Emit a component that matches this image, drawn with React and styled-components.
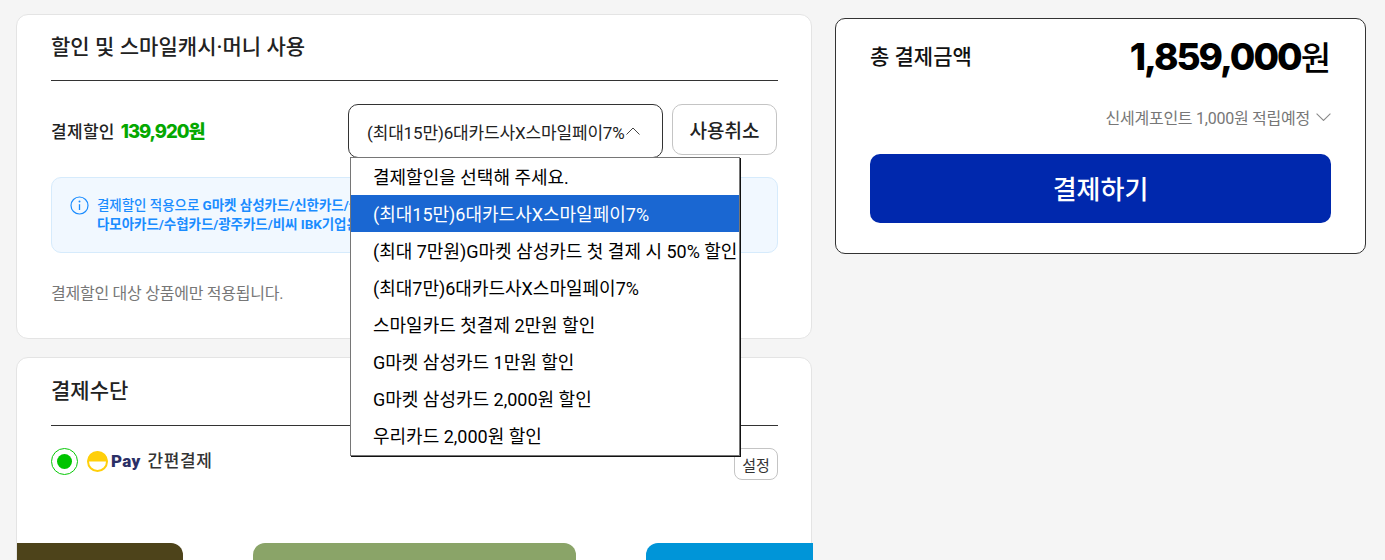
import React from 'react';
import styled, { createGlobalStyle } from 'styled-components';

const GlobalStyle = createGlobalStyle`
  html, body {
    margin: 0;
    padding: 0;
    background: #f5f5f5;
    height: 560px;
    overflow: hidden;
  }
  * {
    box-sizing: border-box;
  }
  body {
    font-family: Roboto, "Noto Sans CJK KR", sans-serif;
    color: #222;
  }
`;

const Page = styled.div`
  display: flex;
  align-items: flex-start;
  gap: 23px;
  padding-left: 16px;
  height: 560px;
  overflow: hidden;
`;

const LeftColumn = styled.div`
  display: flex;
  flex-direction: column;
  gap: 18px;
  width: 796px;
  padding-top: 14px;
`;

const Card = styled.section`
  background: #fff;
  border: 1px solid #e4e4e4;
  border-radius: 12px;
  padding: 0 33px 0 34px;
`;

const DiscountCard = styled(Card)`
  height: 325px;
`;

const PaymentCard = styled(Card)`
  height: 260px;
`;

const CardTitle = styled.h2`
  margin: 0;
  height: ${(p) => p.$height}px;
  border-bottom: 1px solid #333;
  font-size: 21px;
  font-weight: 500;
  line-height: ${(p) => p.$height - 2}px;
  letter-spacing: 0.05px;
  color: #222;
`;

const DiscountRow = styled.div`
  display: flex;
  align-items: flex-start;
  margin-top: 23px;
  padding-right: 1px;
`;

const DiscountLabel = styled.div`
  flex: 1;
  font-size: 17px;
  font-weight: 500;
  line-height: 55px;
  letter-spacing: 0.3px;
`;

const DiscountAmount = styled.strong`
  margin-left: 6px;
  color: #04a800;
  font-family: Inter, "Noto Sans CJK KR", sans-serif;
  font-size: 18.5px;
  font-weight: 800;
  letter-spacing: -1.05px;
`;

const SelectWrap = styled.div`
  position: relative;
  width: 315px;
`;

const SelectBox = styled.div`
  display: flex;
  align-items: center;
  gap: 1px;
  height: 54px;
  padding-left: 18px;
  border: 1px solid #333;
  border-radius: 10px;
  background: #fff;
  font-size: 17px;
  letter-spacing: -0.16px;
  white-space: nowrap;
`;

const OptionList = styled.ul`
  position: absolute;
  top: 53px;
  left: 2px;
  z-index: 5;
  width: 390px;
  margin: 0;
  padding: 0 0 1px;
  list-style: none;
  background: #fff;
  border: 1px solid #767676;
  box-shadow: 1px 1px 0 #111;
`;

const Option = styled.li`
  height: 37px;
  padding: 1px 0 0 22px;
  font-size: 18px;
  line-height: 37px;
  white-space: nowrap;
  overflow: hidden;
  color: ${(p) => (p.$selected ? '#fff' : '#000')};
  background: ${(p) => (p.$selected ? '#1a67d2' : '#fff')};
`;

const CancelButton = styled.button`
  width: 105px;
  height: 51px;
  margin-left: 9px;
  padding: 0;
  border: 1px solid #c4c4c4;
  border-radius: 10px;
  background: #fff;
  color: #222;
  font-family: inherit;
  font-size: 19px;
  font-weight: 500;
`;

const InfoBox = styled.div`
  display: flex;
  gap: 8px;
  height: 76px;
  margin-top: 17px;
  padding: 18px 18px 0;
  background: #f1f8ff;
  border: 1px solid #d6ebfc;
  border-radius: 10px;
`;

const InfoText = styled.p`
  margin: 0;
  color: #1a8cff;
  font-size: 13.5px;
  font-weight: 500;
  line-height: 19px;
  letter-spacing: -0.05px;
  white-space: nowrap;
  overflow: hidden;
  b {
    font-weight: 700;
  }
`;

const Note = styled.p`
  margin: 30px 0 0;
  color: #777;
  font-size: 16px;
  line-height: 22px;
  letter-spacing: -0.25px;
`;

const MethodRow = styled.div`
  display: flex;
  align-items: flex-start;
  margin-top: 22px;
`;

const Radio = styled.span`
  display: flex;
  align-items: center;
  justify-content: center;
  width: 27px;
  height: 27px;
  border: 1px solid #06c806;
  border-radius: 50%;
  &::after {
    content: '';
    width: 15px;
    height: 15px;
    border-radius: 50%;
    background: #00c400;
  }
`;

const PayLogo = styled.svg`
  width: 21px;
  height: 21px;
  margin: 3px 3px 0 9px;
`;

const PayWord = styled.span`
  color: #2b2f66;
  font-family: Roboto, sans-serif;
  font-size: 17px;
  font-weight: 900;
  letter-spacing: 0.3px;
  line-height: 27px;
`;

const MethodName = styled.span`
  flex: 1;
  margin-left: 7px;
  font-size: 17px;
  font-weight: 500;
  line-height: 27px;
  letter-spacing: 0.6px;
  color: #333;
`;

const SettingButton = styled.button`
  width: 44px;
  height: 32px;
  padding: 0;
  border: 1px solid #c4c4c4;
  border-radius: 8px;
  background: #fff;
  color: #333;
  font-family: inherit;
  font-size: 15px;
  font-weight: 400;
`;

const Carousel = styled.div`
  display: flex;
  gap: 70px;
  margin: 63px -35px 0 -34px;
  overflow: hidden;
`;

const Slide = styled.div`
  flex: none;
  width: 323px;
  height: 60px;
  border-radius: 12px 12px 0 0;
  background: ${(p) => p.$color};
  &:first-child {
    margin-left: -157px;
  }
`;

const SummaryCard = styled.aside`
  width: 531px;
  height: 236px;
  margin-top: 18px;
  padding: 0 34px;
  background: #fff;
  border: 1px solid #333;
  border-radius: 10px;
`;

const TotalRow = styled.div`
  display: flex;
  align-items: center;
  justify-content: space-between;
  height: 76px;
`;

const TotalLabel = styled.span`
  margin-top: -5px;
  font-size: 21px;
  font-weight: 500;
  color: #111;
`;

const TotalValue = styled.span`
  margin-top: -3px;
  color: #000;
  font-size: 33px;
  font-weight: 500;
`;

const TotalNumber = styled.strong`
  font-family: Inter, sans-serif;
  font-size: 37px;
  font-weight: 800;
  letter-spacing: -2px;
`;

const PointRow = styled.div`
  display: flex;
  align-items: center;
  justify-content: flex-end;
  gap: 6px;
  height: 22px;
  margin-top: 11px;
  color: #777;
  font-size: 16px;
  letter-spacing: -0.25px;
`;

const PayButton = styled.button`
  display: block;
  width: 461px;
  height: 69px;
  margin-top: 26px;
  padding: 0 0 3px;
  border: 0;
  border-radius: 10px;
  background: #0028ad;
  color: #fff;
  font-family: inherit;
  font-size: 26px;
  font-weight: 500;
`;

const Chevron = ({ up, size = 14, color = '#444' }) => (
  <svg width={size} height={size / 2 + 1} viewBox="0 0 14 8" fill="none">
    <path
      d={up ? 'M0.5 7.5L7 1L13.5 7.5' : 'M0.5 0.5L7 7L13.5 0.5'}
      stroke={color}
      strokeWidth="1"
    />
  </svg>
);

const options = [
  '결제할인을 선택해 주세요.',
  '(최대15만)6대카드사X스마일페이7%',
  '(최대 7만원)G마켓 삼성카드 첫 결제 시 50% 할인',
  '(최대7만)6대카드사X스마일페이7%',
  '스마일카드 첫결제 2만원 할인',
  'G마켓 삼성카드 1만원 할인',
  'G마켓 삼성카드 2,000원 할인',
  '우리카드 2,000원 할인',
];

function App() {
  return (
    <Page>
      <GlobalStyle />
      <LeftColumn>
        <DiscountCard>
          <CardTitle $height={66}>할인 및 스마일캐시·머니 사용</CardTitle>
          <DiscountRow>
            <DiscountLabel>
              결제할인
              <DiscountAmount>139,920원</DiscountAmount>
            </DiscountLabel>
            <SelectWrap>
              <SelectBox>
                (최대15만)6대카드사X스마일페이7%
                <Chevron up />
              </SelectBox>
              <OptionList>
                {options.map((o, i) => (
                  <Option key={o} $selected={i === 1}>
                    {o}
                  </Option>
                ))}
              </OptionList>
            </SelectWrap>
            <CancelButton>사용취소</CancelButton>
          </DiscountRow>
          <InfoBox>
            <svg width="19" height="19" viewBox="0 0 19 19" fill="none" style={{ flex: 'none' }}>
              <circle cx="9.5" cy="9.5" r="8.5" stroke="#1a8cff" strokeWidth="1.2" />
              <circle cx="9.5" cy="5.6" r="1" fill="#1a8cff" />
              <path d="M9.5 8.2V14" stroke="#1a8cff" strokeWidth="1.3" />
            </svg>
            <InfoText>
              결제할인 적용으로 <b>G마켓 삼성카드/신한카드/국민카드/현대카드/롯데카드/하나카드/농협카드/우리</b>
              <br />
              <b>다모아카드/수협카드/광주카드/비씨 IBK기업은행카드</b>
            </InfoText>
          </InfoBox>
          <Note>결제할인 대상 상품에만 적용됩니다.</Note>
        </DiscountCard>
        <PaymentCard>
          <CardTitle $height={68}>결제수단</CardTitle>
          <MethodRow>
            <Radio />
            <PayLogo viewBox="0 0 21 21">
              <circle cx="10.5" cy="10.5" r="9.5" fill="#fff" stroke="#ffcf0a" strokeWidth="2" />
              <path d="M0.5 10.5a10 10 0 0 1 20 0z" fill="#ffcf0a" />
            </PayLogo>
            <PayWord>Pay</PayWord>
            <MethodName>간편결제</MethodName>
            <SettingButton>설정</SettingButton>
          </MethodRow>
          <Carousel>
            <Slide $color="#4d431a" />
            <Slide $color="#8aa468" />
            <Slide $color="#0095d8" />
          </Carousel>
        </PaymentCard>
      </LeftColumn>
      <SummaryCard>
        <TotalRow>
          <TotalLabel>총 결제금액</TotalLabel>
          <TotalValue>
            <TotalNumber>1,859,000</TotalNumber>원
          </TotalValue>
        </TotalRow>
        <PointRow>
          신세계포인트 1,000원 적립예정
          <Chevron color="#888" size={15} />
        </PointRow>
        <PayButton>결제하기</PayButton>
      </SummaryCard>
    </Page>
  );
}

export default App;
